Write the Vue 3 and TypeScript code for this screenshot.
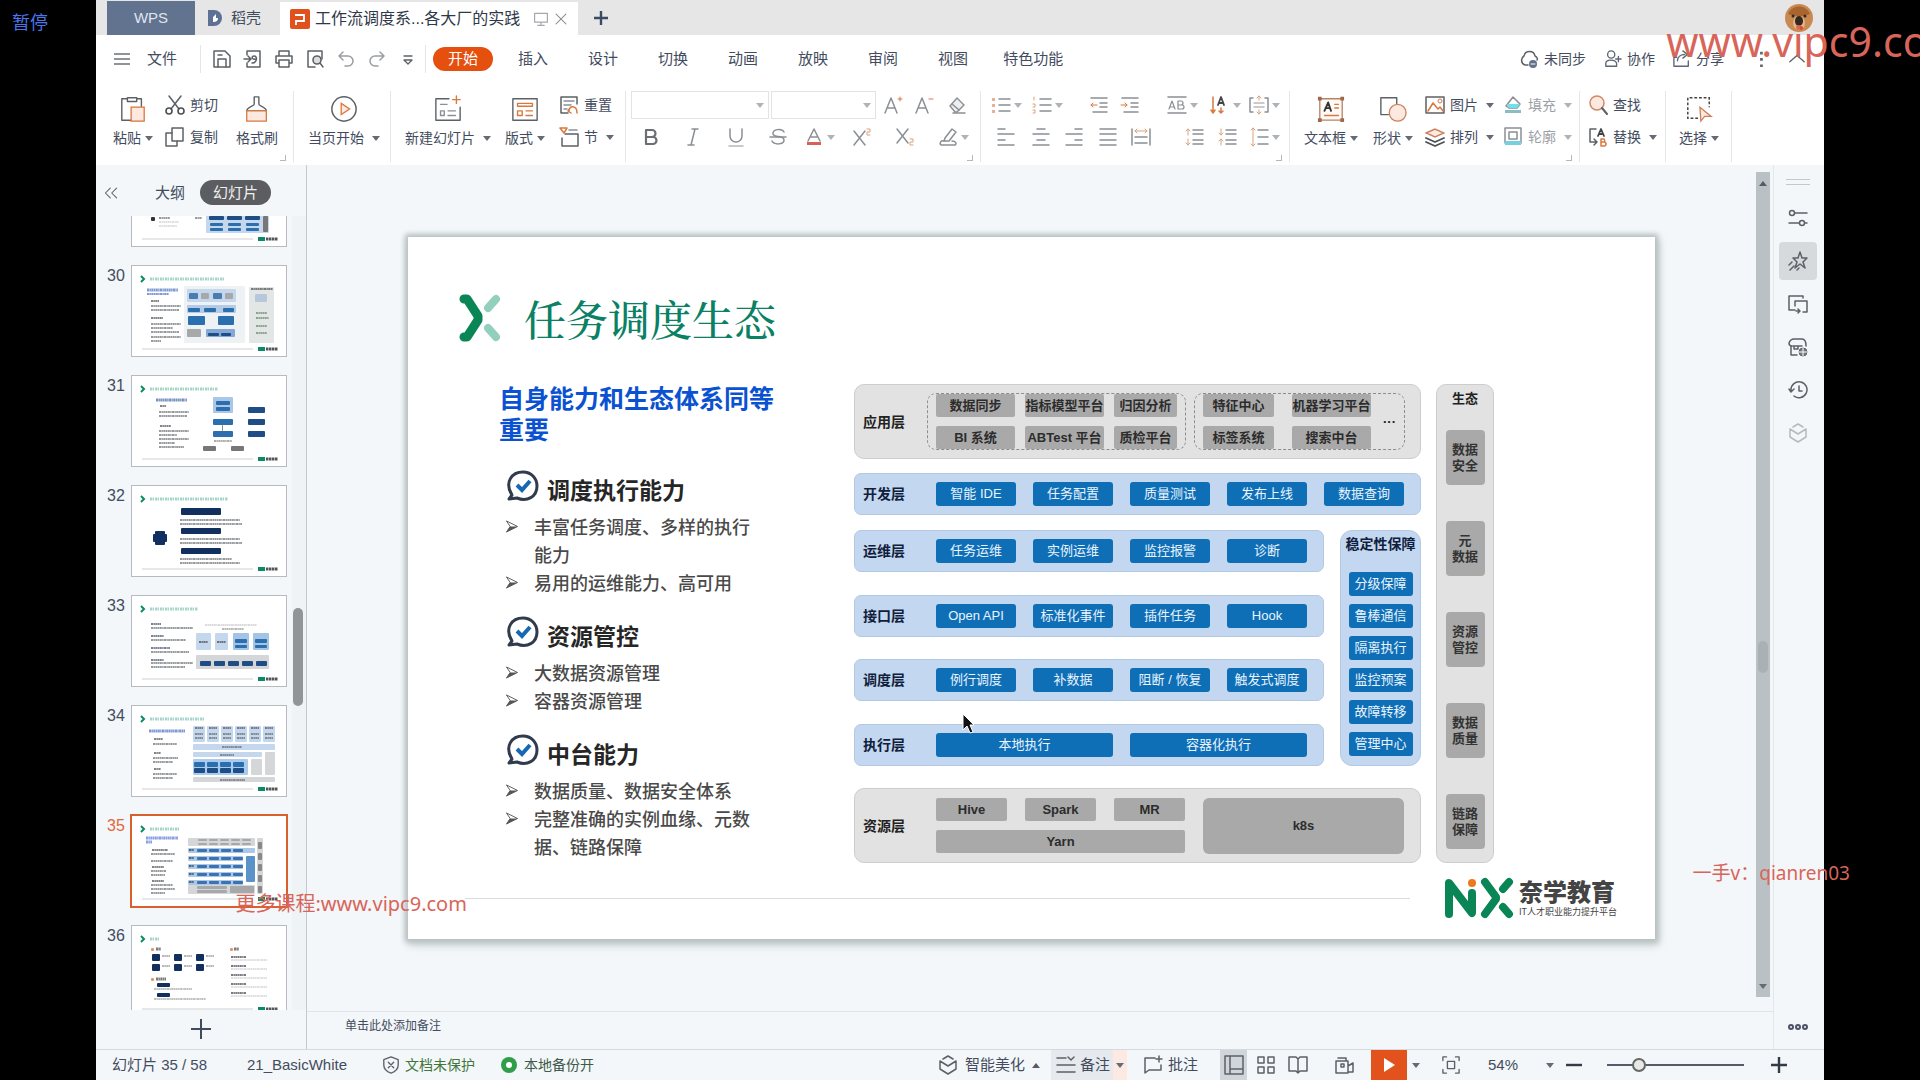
<script setup lang="ts">
import { ref } from 'vue'

interface Tool { id: string; label: string; caret?: boolean }
interface Mark { t: 'r' | 'd'; x: number; y: number; w: number; h: number; c: string }
interface Thumb { no: number; title: number; marks: Mark[] }

const G = '#5d6166'
const L = '#8a8f94'
const O = '#d9783f'

const line = (d: string, c = G, w = 1.5) =>
  `<path d="${d}" fill="none" stroke="${c}" stroke-width="${w}" stroke-linecap="round" stroke-linejoin="round"/>`
const solid = (d: string, c = G) => `<path d="${d}" fill="${c}"/>`

const icons: Record<string, string> = {
  save: line('M2 2H13L18 7V18H2Z') + line('M6 18V10H14V18M6 6H10'),
  export: line('M4 6V2H17V18H4V14') + line('M1 10H7M5 7L8 10L5 13M9 14C14 14 15 7 11 7C8 7 9 11 12 10'),
  print: line('M5 7V2H15V7M5 14H2V7H18V14H15M5 11H15V18H5Z'),
  preview: line('M17 10V2H3V18H10') + '<circle cx="12" cy="11" r="4" fill="#ddd" stroke="#5d6166" stroke-width="1.6"/>' + line('M15 14L18 18'),
  undo: line('M3 7H12A5 5 0 0 1 12 17H9M7 3L3 7L7 11', '#9a9da2'),
  redo: line('M17 7H8A5 5 0 0 0 8 17H11M13 3L17 7L13 11', '#9a9da2'),
  more: line('M6 7H14M6 11L10 15L14 11Z', G, 1.3),
  paste: line('M9 4H3V27H13M19 4H24V12') + line('M9 3H19V7H9Z') + '<rect x="13" y="13" width="14" height="15" fill="#fde9e0" stroke="#d9783f" stroke-width="1.4"/>',
  cut: line('M4 1L14 14M16 1L6 14') + '<circle cx="4" cy="16" r="3" fill="none" stroke="#4c5056" stroke-width="1.6"/><circle cx="16" cy="16" r="3" fill="none" stroke="#4c5056" stroke-width="1.6"/>',
  copy: line('M7 1H18V14H7Z') + line('M7 6H1V19H12V14'),
  brush: line('M12 10V2H17V10C17 12 25 13 25 17H4C4 13 12 12 12 10Z') + '<path d="M4 17V28H25V17Z" fill="#fde9e0" stroke="#d9783f" stroke-width="1.4"/>',
  play: '<circle cx="15" cy="15" r="13" fill="none" stroke="#5d6166" stroke-width="1.6"/><path d="M12 9L21 15L12 21Z" fill="#fde9e0" stroke="#d9783f" stroke-width="1.4"/>',
  newslide: line('M16 4H2V27H28V13') + line('M7 10H14M15 17H23M15 22H23M7 17H11V22H7Z', L) + line('M24 1V9M20 5H28', O),
  layout: line('M2 4H28V27H2Z') + line('M7 9H23V12H7ZM7 17H12V22H7Z', O) + line('M16 17H23M16 22H23', O),
  reset: line('M9 18H2V2H18V9') + line('M5 6H15M5 10H12M5 14H8', L) + line('M11 13L9 16L12 18M10 16C10 10 18 10 18 18', O),
  section: line('M6 7H19V19H3V11') + line('M10 3H18', L) + line('M1 1H8L5 6Z', O),
  aplus: line('M2 18L8 3L14 18M4 13H12', L) + line('M17 2V6M15 4H19', O, 1),
  aminus: line('M2 18L8 3L14 18M4 13H12', L) + line('M15 4H19', O, 1),
  eraser: '<path d="M3 11L10 3L17 10L10 17H8Z" fill="#eceef0" stroke="#8a8f94" stroke-width="1.4"/>' + line('M6 18H18M5 9L12 15', L),
  bold: line('M5 3H11A3 3 0 0 1 11 10H5ZM5 10H12A3 3 0 0 1 12 17H5Z', '#6b6f74', 2.2),
  italic: line('M9 2H15M5 18H11M12 2L8 18', L),
  under: line('M4 2V9A6 6 0 0 0 16 9V2', L) + line('M3 19H17', '#b5b8bb'),
  strike: line('M16 5C14 1 4 2 5 7C6 11 16 8 16 13C16 18 6 18 4 14', L) + line('M2 10H18', L),
  acolor: line('M4 14L10 2L16 14M6 10H14', L) + solid('M3 15H17V18H3Z', '#d8605a'),
  sup: line('M2 4L13 18M13 4L2 18', L) + line('M15 2H18V5H15V8H18', '#dba27e', 1),
  sub: line('M2 2L13 16M13 2L2 16', L) + line('M15 12H18V15H15V18H18', '#dba27e', 1),
  hilite: line('M7 11L14 2L18 5L11 14L6 14Z', L) + line('M3 18C1 16 3 13 6 14M3 18H17C19 17 18 14 14 14', L),
  bullets: line('M8 4H19M8 10H19M8 16H19', L) + solid('M1 3h3v3h-3zM1 9h3v3h-3zM1 15h3v3h-3z', '#e2b394'),
  numbers: line('M8 4H19M8 10H19M8 16H19', L) + line('M2 2V5M1 9H3V12H1M1 15H3V18H1', '#e2a27c', 1),
  outdent: line('M2 3H18M11 8H18M11 12H18M4 17H18', L) + line('M8 10H2M4 8L2 10L4 12', O, 1),
  indent: line('M2 3H18M11 8H18M11 12H18M4 17H18', L) + line('M1 10H7M5 8L7 10L5 12', O, 1),
  ab: line('M1 2H19M1 18H19', L) + line('M2 14L5 6L8 14M3 12H7M11 6V14H15A2 2 0 0 0 15 10H11M11 6H14A2 2 0 0 1 14 10', L, 1.2),
  dir: line('M3 2V17M1 15L3 18L5 15', O) + line('M8 10L11 2L14 10M9 8H13', '#444', 1.8) + line('M11 13V18M9 16L11 18L13 16', O),
  valign: line('M4 3H1V17H4M16 3H19V17H16', L) + line('M5 8H15M5 12H15', '#bbb') + line('M10 1V5M8 3L10 1L12 3M10 19V15M8 17L10 19L12 17', '#dba27e', 1),
  left: line('M2 2H9M2 7H18M2 13H9M2 18H18', L),
  center: line('M6 2H14M2 7H18M6 13H14M2 18H18', L),
  right: line('M11 2H18M2 7H18M11 13H18M2 18H18', L),
  justify: line('M2 2H18M2 7H18M2 13H18M2 18H18', L),
  spread: line('M1 2V18M19 2V18M4 10H16M4 16H16', L) + line('M4 4H16M6 2L4 4L6 6M14 2L16 4L14 6', '#dba27e', 1),
  lineUp: line('M9 3H19M9 7H19M9 13H19M9 17H19', L) + line('M4 8V2M2 4L4 2L6 4M4 12V18M2 16L4 18L6 16', '#dba27e', 1),
  lineDown: line('M9 3H19M9 7H19M9 13H19M9 17H19', L) + line('M4 2V8M2 6L4 8L6 6M4 18V12M2 14L4 12L6 14', '#dba27e', 1),
  lineGap: line('M9 3H19M9 10H19M9 17H19', L) + line('M4 1V19M2 3L4 1L6 3M2 17L4 19L6 17', '#dba27e', 1),
  textbox: '<path d="M3 4H27V27H3Z" fill="#fffaf7" stroke="#b9825f" stroke-width="1.4"/>' + line('M8 17L12 8L15 17M9 14H14', '#333', 2) + line('M19 10H23M19 14H23M8 22H23', O) + solid('M1 2h4v4h-4zM25 2h4v4h-4zM1 25h4v4h-4zM25 25h4v4h-4z', '#9a6a50'),
  shape: line('M10 21H2V3H19V9') + '<circle cx="20" cy="19" r="9" fill="#fde9e0" stroke="#c9825c" stroke-width="1.4"/>',
  image: line('M1 2H19V18H1Z') + line('M3 16L8 8L13 14L15 12L18 16', O) + '<circle cx="15" cy="6" r="2" fill="none" stroke="#d9783f"/>',
  arrange: line('M1 11L10 15L19 11M1 15L10 19L19 15', '#4c5056', 1.8) + '<path d="M1 6L10 2L19 6L10 10Z" fill="#fde9e0" stroke="#c9825c" stroke-width="1.4"/>',
  fill: line('M3 11L10 2L17 9L14 13H6Z', L) + solid('M4 9H17L14 13H6Z', '#6fe0ee') + solid('M2 15H18V18H2Z', '#8bbcc6'),
  outline: line('M2 1H18V16H2Z', L) + line('M6 5H14V12H6Z', L) + solid('M2 14H18V18H2Z', '#78cfe0'),
  find: '<circle cx="9" cy="8" r="7" fill="#fde9e0" stroke="#d08a68" stroke-width="1.5"/>' + line('M14 13L19 19', G, 2),
  replace: line('M8 2H2V15H8M6 12L9 15L6 18') + line('M10 9L13 2L16 9M11 7H15', '#444', 1.8) + line('M13 12V19H16A2 2 0 0 0 16 15H13M13 12H16A2 2 0 0 1 16 15', O),
  select: '<path d="M14 25H3V3H26V13" fill="none" stroke="#444" stroke-width="1.6" stroke-dasharray="3 2"/><path d="M16 13L28 23L21 23L17 28Z" fill="#fde9e0" stroke="#c9825c" stroke-width="1.4"/>',
  cloud: line('M9 16H6A5 5 0 0 1 5 7C6 1 15 1 16 7C18 8 19 10 18 11') + '<circle cx="14" cy="15" r="4" fill="#66718a"/>' + line('M12 15H16', '#fff', 1),
  coop: '<circle cx="8" cy="5" r="4" fill="none" stroke="#5d6675" stroke-width="1.5"/>' + line('M2 18V15C2 10 13 10 14 15V18ZM16 7V13M13 10H19', '#5d6675'),
  share: line('M4 8H1V18H17V12M5 12C5 7 9 5 13 5M11 1L16 5L11 9', '#5d6675'),
  up: line('M2 13L10 6L18 13'),
  setting: '<circle cx="4" cy="5" r="2.5" fill="none" stroke="#5d6166" stroke-width="1.5"/><circle cx="14" cy="15" r="2.5" fill="none" stroke="#5d6166" stroke-width="1.5"/>' + line('M7 5H19M1 15H11M17 15H19'),
  star: line('M12 1L14 7H19L15 11L17 17L12 13L7 17L9 11L5 7H10Z') + line('M4 11L1 14M6 15L2 19M11 17L9 19'),
  window: line('M7 16H1V2H15V4') + line('M7 12V7H19V18H15M8 17H12M10 15L12 17L10 19'),
  shop: line('M3 9V18H9M4 9A3 3 0 0 1 1 6C2 3 4 2 6 2H14C16 2 18 4 18 9') + line('M5 9H14M6 9V12H10V9') + '<circle cx="15" cy="15" r="4" fill="#777b80" stroke="#5d6166"/>' + line('M11 15H19M15 11V19', '#fff', 1),
  history: line('M3 10A8 8 0 1 1 6 16M1 9L3 12L6 9') + line('M11 6V11H14'),
  cube: line('M5 4L10 1L15 4M2 6V14L10 19L18 14V6L10 11Z'),
  shield: line('M10 1L18 4V10C18 15 13 18 10 19C7 18 2 15 2 10V4Z') + line('M7 7L13 13M13 7L7 13'),
  notes: line('M1 3H10M1 10H19M1 17H19M12 2L15 5L18 2'),
  comment: line('M12 3H2V18L6 15H18V10M16 1V7M13 4H19'),
  normal: line('M1 1H19V19H1ZM6 1V19M6 14H19'),
  grid: line('M2 2H8V8H2ZM12 2H18V8H12ZM2 12H8V18H2ZM12 12H18V18H12Z'),
  book: line('M10 4L8 2H1V16H8L10 18L12 16H19V2H12L10 4V18'),
  record: line('M2 6H14V18H2ZM14 11L19 8V17H14M4 3H12V6') + line('M7 9V12H10V9Z'),
  fit: line('M1 5V1H5M15 1H19V5M19 15V19H15M5 19H1V15') + line('M6 6H14V14H6Z'),
  monitor: line('M2 3H18V14H2ZM10 14V18M6 18H14', '#a5a9ae'),
  close: line('M3 3L17 17M17 3L3 17', '#8c9096'),
  collapse: line('M9 3L2 10L9 17M18 3L11 10L18 17'),
}

const quick: Tool[] = [
  { id: 'save', label: '保存' }, { id: 'export', label: '输出' }, { id: 'print', label: '打印' },
  { id: 'preview', label: '预览' }, { id: 'undo', label: '撤销' }, { id: 'redo', label: '恢复' }, { id: 'more', label: '更多' },
]
const menus = ['开始', '插入', '设计', '切换', '动画', '放映', '审阅', '视图', '特色功能']
const active = ref('开始')

const fontTools: Tool[] = [
  { id: 'bold', label: '加粗' }, { id: 'italic', label: '倾斜' }, { id: 'under', label: '下划线' }, { id: 'strike', label: '删除线' },
  { id: 'acolor', label: '字体颜色', caret: true }, { id: 'sup', label: '上标' }, { id: 'sub', label: '下标' }, { id: 'hilite', label: '突出显示', caret: true },
]
const paraTop: Tool[] = [
  { id: 'bullets', label: '项目符号', caret: true }, { id: 'numbers', label: '编号', caret: true }, { id: 'outdent', label: '减少缩进' },
  { id: 'indent', label: '增加缩进' }, { id: 'ab', label: '字符间距', caret: true }, { id: 'dir', label: '文字方向', caret: true }, { id: 'valign', label: '对齐文本', caret: true },
]
const paraBottom: Tool[] = [
  { id: 'left', label: '左对齐' }, { id: 'center', label: '居中' }, { id: 'right', label: '右对齐' }, { id: 'justify', label: '两端对齐' },
  { id: 'spread', label: '分散对齐' }, { id: 'lineUp', label: '增加段距' }, { id: 'lineDown', label: '减少段距' }, { id: 'lineGap', label: '行距', caret: true },
]
const side: Tool[] = [
  { id: 'setting', label: '属性' }, { id: 'star', label: '动画窗格' }, { id: 'window', label: '切换窗格' },
  { id: 'shop', label: '资源' }, { id: 'history', label: '历史' }, { id: 'cube', label: '美化' },
]

/* Miniature slides: r = filled block, d = a run of small print */
const r = (x: number, y: number, w: number, h: number, c: string): Mark => ({ t: 'r', x, y, w, h, c })
const d = (x: number, y: number, w: number, c = '#55595e', h = 2): Mark => ({ t: 'd', x, y, w, h, c })
const pale = '#c5d7ec', blue = '#2c6fae', deep = '#1f4e86', navy = '#12305f', grey = '#d4d6d8', mid = '#a6a8aa'
const range = (n: number) => Array.from({ length: n }, (_, i) => i)

const thumbs: Thumb[] = [
  { no: 29, title: 60, marks: [r(74, 44, 63, 33, pale), r(131, 60, 5, 16, '#777'), r(19, 61, 4, 4, '#333'), d(27, 62, 11), d(63, 62, 7), d(27, 66, 20, '#999', 1), d(27, 70, 18, '#999', 1),
    ...[0, 1, 2].flatMap(i => [r(77 + i * 18, 60, 15, 4, deep), r(78 + i * 18, 67, 13, 3, blue), r(78 + i * 18, 72, 13, 3, blue)])] },
  { no: 30, title: 74, marks: [r(52, 20, 61, 57, '#eff2f5'), r(55, 23, 49, 13, pale), r(55, 39, 49, 8, '#b3cbe6'), r(117, 21, 25, 56, '#e2e6e4'), d(15, 24, 31, '#2a56b8', 3), d(15, 28, 22, '#2a56b8'),
    r(57, 27, 9, 6, '#4a7daf'), r(81, 27, 9, 6, '#4a7daf'), r(69, 27, 8, 6, mid), r(93, 27, 8, 6, mid), r(56, 42, 12, 4, blue), r(72, 42, 12, 4, blue), r(91, 42, 11, 4, blue),
    r(56, 50, 17, 9, blue), r(86, 50, 16, 9, blue), r(55, 63, 14, 8, mid), r(74, 63, 29, 8, '#84a9d6'), r(76, 67, 11, 3, deep), r(89, 67, 10, 3, deep), r(123, 28, 12, 8, '#b8c8dc'),
    d(19, 35, 8, '#333'), d(19, 40, 30), d(19, 44, 28), d(19, 52, 12, '#333'), d(19, 58, 30), d(19, 62, 22), d(19, 66, 28), d(19, 71, 30), d(19, 75, 10), d(119, 23, 22, '#333'),
    d(124, 47, 11, '#567a5a'), d(124, 52, 13, '#567a5a'), d(124, 60, 11, '#567a5a'), d(124, 67, 11, '#567a5a')] },
  { no: 31, title: 68, marks: [r(81, 21, 20, 16, '#a9c7e6'), r(84, 25, 14, 4, blue), r(84, 31, 14, 4, blue), r(81, 43, 20, 6, blue), r(81, 55, 20, 6, blue), r(116, 31, 17, 6, deep), r(116, 43, 17, 6, deep), r(116, 55, 17, 6, deep),
    r(71, 70, 13, 5, '#777'), r(99, 70, 13, 5, '#777'), r(90, 49, 1, 6, '#888'), d(24, 24, 31, '#24499a', 3), d(28, 30, 6, '#333'), d(27, 36, 30), d(27, 40, 28), d(28, 50, 11, '#333'), d(27, 55, 30), d(27, 59, 18), d(27, 63, 30), d(27, 67, 16), d(27, 71, 25), d(82, 65, 18, '#777')] },
  { no: 32, title: 78, marks: [r(49, 22, 40, 7, navy), r(49, 42, 40, 6, navy), r(49, 62, 40, 6, navy), r(23, 45, 10, 14, navy), r(21, 48, 14, 8, navy), d(48, 34, 60), d(48, 38, 62), d(48, 53, 60), d(48, 57, 62), d(48, 73, 52), d(48, 77, 60)] },
  { no: 33, title: 48, marks: [r(64, 37, 15, 17, pale), r(83, 37, 13, 17, pale), r(101, 37, 16, 17, '#a4c4e6'), r(121, 37, 16, 17, '#a4c4e6'), r(64, 59, 73, 14, grey), r(103, 43, 12, 4, blue), r(103, 49, 12, 3, blue), r(123, 43, 12, 4, blue), r(123, 49, 12, 3, blue), d(67, 46, 9, '#333'), d(85, 46, 9, '#333'),
    ...range(5).map(i => r(68 + i * 14, 65, 11, 5, deep)), d(19, 28, 10, '#22304e'), d(19, 32, 42), d(19, 40, 13, '#22304e'), d(19, 44, 35), d(19, 52, 19, '#22304e'), d(19, 56, 38), d(19, 64, 13, '#22304e'), d(19, 67, 42), d(19, 71, 34), d(73, 29, 52, '#888', 1), d(90, 33, 22, '#888')] },
  { no: 34, title: 54, marks: [...range(6).flatMap(i => [r(61 + i * 14, 20, 12, 16, pale), d(63 + i * 14, 22, 8, '#444'), d(63 + i * 14, 28, 8), d(63 + i * 14, 32, 8)]), r(61, 38, 82, 6, pale), r(61, 46, 69, 5, pale), r(61, 53, 55, 16, '#a9cbee'),
    ...range(4).flatMap(i => [r(62 + i * 13, 56, 11, 5, blue), r(62 + i * 13, 62, 11, 5, deep)]), r(119, 53, 11, 16, grey), r(133, 46, 10, 23, grey), r(61, 71, 82, 5, grey), d(17, 25, 36, '#2a56b8', 3), d(22, 33, 9, '#333'), d(21, 38, 24), d(22, 47, 7, '#333'), d(21, 52, 25), d(21, 56, 20), d(22, 63, 7, '#333'), d(21, 68, 24), d(21, 72, 20), d(90, 41, 20), d(88, 49, 14), d(88, 74, 25)] },
  { no: 35, title: 30, marks: [r(56, 22, 67, 8, grey), ...range(5).flatMap(i => [r(66 + i * 11, 23, 9, 2, mid), r(66 + i * 11, 27, 9, 2, mid)]), ...range(5).flatMap(i => [r(56, 32 + i * 8, i === 0 ? 67 : 55, 5, '#a9c7e6'), ...range(4).map(j => r(65 + j * 12, 33 + i * 8, 10, 3, '#3d72b0')), d(57, 34 + i * 8, 5, '#223')]),
    r(114, 40, 9, 26, '#5b93c8'), r(56, 69, 67, 9, grey), r(65, 70, 30, 3, mid), r(65, 74, 30, 3, mid), r(98, 70, 24, 7, mid), r(125, 22, 6, 56, grey), ...range(5).map(i => r(126, 26 + i * 11, 4, 7, '#888')),
    d(14, 22, 32, '#3a62d0', 3), d(14, 26, 6, '#3a62d0', 3), d(20, 34, 16, '#333'), d(19, 38, 24), d(19, 45, 22), d(20, 51, 12, '#333'), d(19, 55, 15), d(19, 59, 14), d(20, 65, 12, '#333'), d(19, 69, 22), d(19, 73, 24), d(19, 77, 14)] },
  { no: 36, title: 10, marks: [...range(3).flatMap(i => [r(20 + i * 22, 28, 8, 7, navy), r(20 + i * 22, 38, 8, 7, navy), d(30 + i * 22, 30, 8, '#888'), d(30 + i * 22, 40, 8, '#888')]), r(25, 57, 13, 4, navy), r(25, 67, 13, 4, navy), r(19, 22, 3, 3, '#d96'), r(98, 22, 3, 3, '#d96'), r(19, 52, 3, 3, '#d96'),
    d(24, 23, 5, '#222', 3), d(102, 23, 5, '#222', 3), d(24, 53, 10, '#222', 3), d(22, 63, 38, '#999'), d(22, 73, 52, '#999'), ...range(5).flatMap(i => [d(99, 31 + i * 9, 15, '#223'), d(99, 34 + i * 9, 36, '#999', 1)])] },
]

const sections = [
  { head: '调度执行能力', items: ['丰富任务调度、多样的执行能力', '易用的运维能力、高可用'] },
  { head: '资源管控', items: ['大数据资源管理', '容器资源管理'] },
  { head: '中台能力', items: ['数据质量、数据安全体系', '完整准确的实例血缘、元数据、链路保障'] },
]
const appLeft = ['数据同步', '指标模型平台', '归因分析', 'BI 系统', 'ABTest 平台', '质检平台']
const appRight = ['特征中心', '机器学习平台', '标签系统', '搜索中台']
const layers = [
  { name: '运维层', chips: ['任务运维', '实例运维', '监控报警', '诊断'] },
  { name: '接口层', chips: ['Open API', '标准化事件', '插件任务', 'Hook'] },
  { name: '调度层', chips: ['例行调度', '补数据', '阻断 / 恢复', '触发式调度'] },
  { name: '执行层', chips: ['本地执行', '容器化执行'], wide: true },
]
const stability = ['分级保障', '鲁棒通信', '隔离执行', '监控预案', '故障转移', '管理中心']
const eco = [['数据', '安全'], ['元', '数据'], ['资源', '管控'], ['数据', '质量'], ['链路', '保障']]
const zoom = ref(20)
</script>

<template>
  <div class="screen">
    <div class="app">
      <header class="tabs">
        <button class="tab home">WPS</button>
        <button class="tab docer">
          <svg class="dlogo" viewBox="0 0 16 18"><path d="M1 1H7A8 8 0 0 1 7 17H1Z" fill="#5d7194" /><path d="M6 13V8L9 5V9H11C11 12 9 13 6 13Z" fill="#fff" /></svg>稻壳
        </button>
        <button class="tab doc">
          <svg class="plogo" viewBox="0 0 20 20"><rect width="20" height="20" rx="2" fill="#e1511d" /><path d="M5 6H14V12H6V16" fill="none" stroke="#fff" stroke-width="1.8" /></svg>
          <span class="name">工作流调度系...各大厂的实践</span>
          <svg class="i16" viewBox="0 0 20 20" v-html="icons.monitor"></svg>
          <svg class="i14" viewBox="0 0 20 20" v-html="icons.close"></svg>
        </button>
        <button class="tab add" aria-label="新建"><svg class="i16" viewBox="0 0 16 16"><path d="M8 1V15M1 8H15" stroke="#3d4a63" stroke-width="2.4" /></svg></button>
        <svg class="avatar" viewBox="0 0 28 28"><circle cx="14" cy="14" r="14" fill="#c98a52" /><path d="M3 10C7 0 21 0 25 10L19 12H9Z" fill="#a8652f" /><ellipse cx="14" cy="19" rx="6" ry="7" fill="#e0b688" /><ellipse cx="14" cy="17" rx="4" ry="5" fill="#33271f" /><circle cx="8" cy="12" r="1.5" fill="#33271f" /><circle cx="20" cy="12" r="1.5" fill="#33271f" /><circle cx="16" cy="24" r="2" fill="#e0432f" /></svg>
      </header>

      <nav class="menu">
        <button class="file"><svg class="i16" viewBox="0 0 16 16"><path d="M0 3H16M0 8H16M0 13H16" stroke="#6c7076" stroke-width="1.6" /></svg>文件</button>
        <div class="quick">
          <button v-for="q in quick" :key="q.id" :aria-label="q.label"><svg class="i20" viewBox="0 0 20 20" v-html="icons[q.id]"></svg></button>
        </div>
        <div class="menus">
          <button v-for="m in menus" :key="m" :class="{ on: active === m }" @click="active = m">{{ m }}</button>
        </div>
        <div class="account">
          <button><svg class="i20" viewBox="0 0 20 20" v-html="icons.cloud"></svg>未同步</button>
          <button><svg class="i18" viewBox="0 0 20 20" v-html="icons.coop"></svg>协作</button>
          <button><svg class="i18" viewBox="0 0 20 20" v-html="icons.share"></svg>分享</button>
          <button aria-label="更多"><svg class="i18" viewBox="0 0 20 20"><path d="M9 2h3v3h-3zM9 9h3v3h-3zM9 16h3v3h-3z" fill="#5d6675" /></svg></button>
          <button aria-label="收起"><svg class="i18" viewBox="0 0 20 20" v-html="icons.up"></svg></button>
        </div>
      </nav>

      <section class="ribbon">
        <div class="group g-clip">
          <button class="big"><svg viewBox="0 0 30 30" v-html="icons.paste"></svg><span>粘贴<i class="car"></i></span></button>
          <div class="pair">
            <button class="small"><svg viewBox="0 0 20 20" v-html="icons.cut"></svg>剪切</button>
            <button class="small"><svg viewBox="0 0 20 20" v-html="icons.copy"></svg>复制</button>
          </div>
          <button class="big"><svg viewBox="0 0 30 30" v-html="icons.brush"></svg><span>格式刷</span></button>
          <i class="corner"></i>
        </div>
        <div class="group g-play">
          <button class="big"><svg viewBox="0 0 30 30" v-html="icons.play"></svg><span>当页开始<i class="car wide"></i></span></button>
        </div>
        <div class="group g-slide">
          <button class="big"><svg viewBox="0 0 30 30" v-html="icons.newslide"></svg><span>新建幻灯片<i class="car wide"></i></span></button>
          <button class="big"><svg viewBox="0 0 30 30" v-html="icons.layout"></svg><span>版式<i class="car"></i></span></button>
          <div class="pair">
            <button class="small"><svg viewBox="0 0 20 20" v-html="icons.reset"></svg>重置</button>
            <button class="small"><svg viewBox="0 0 20 20" v-html="icons.section"></svg>节<i class="car"></i></button>
          </div>
        </div>
        <div class="group g-font">
          <div class="row font-top">
            <label class="combo"><select aria-label="字体"><option></option></select><i class="car pale"></i></label>
            <label class="combo size"><select aria-label="字号"><option></option></select><i class="car pale"></i></label>
            <button aria-label="增大字号"><svg class="i20" viewBox="0 0 20 20" v-html="icons.aplus"></svg></button>
            <button aria-label="减小字号"><svg class="i20" viewBox="0 0 20 20" v-html="icons.aminus"></svg></button>
            <button aria-label="清除格式"><svg class="i20" viewBox="0 0 20 20" v-html="icons.eraser"></svg></button>
          </div>
          <div class="row font-bottom">
            <button v-for="t in fontTools" :key="t.id" :aria-label="t.label"><svg class="i20" viewBox="0 0 20 20" v-html="icons[t.id]"></svg><i v-if="t.caret" class="car pale"></i></button>
          </div>
          <i class="corner"></i>
        </div>
        <div class="group g-para">
          <div class="row para-top">
            <button v-for="t in paraTop" :key="t.id" :aria-label="t.label"><svg class="i20" viewBox="0 0 20 20" v-html="icons[t.id]"></svg><i v-if="t.caret" class="car pale"></i></button>
          </div>
          <div class="row para-bottom">
            <button v-for="t in paraBottom" :key="t.id" :aria-label="t.label"><svg class="i20" viewBox="0 0 20 20" v-html="icons[t.id]"></svg><i v-if="t.caret" class="car pale"></i></button>
          </div>
          <i class="corner"></i>
        </div>
        <div class="group g-draw">
          <button class="big"><svg viewBox="0 0 30 30" v-html="icons.textbox"></svg><span>文本框<i class="car"></i></span></button>
          <button class="big"><svg viewBox="0 0 30 30" v-html="icons.shape"></svg><span>形状<i class="car"></i></span></button>
          <div class="pair">
            <button class="small"><svg viewBox="0 0 20 20" v-html="icons.image"></svg>图片<i class="car"></i></button>
            <button class="small"><svg viewBox="0 0 20 20" v-html="icons.arrange"></svg>排列<i class="car"></i></button>
          </div>
          <div class="pair off">
            <button class="small"><svg viewBox="0 0 20 20" v-html="icons.fill"></svg>填充<i class="car pale"></i></button>
            <button class="small"><svg viewBox="0 0 20 20" v-html="icons.outline"></svg>轮廓<i class="car pale"></i></button>
          </div>
          <i class="corner"></i>
        </div>
        <div class="group g-find">
          <div class="pair">
            <button class="small"><svg viewBox="0 0 20 20" v-html="icons.find"></svg>查找</button>
            <button class="small"><svg viewBox="0 0 20 20" v-html="icons.replace"></svg>替换<i class="car"></i></button>
          </div>
        </div>
        <div class="group g-select">
          <button class="big"><svg viewBox="0 0 30 30" v-html="icons.select"></svg><span>选择<i class="car"></i></span></button>
        </div>
      </section>

      <main class="work">
        <aside class="outline">
          <div class="switch">
            <button aria-label="折叠"><svg class="i14" viewBox="0 0 20 20" v-html="icons.collapse"></svg></button>
            <button class="out">大纲</button>
            <button class="on">幻灯片</button>
          </div>
          <div class="scroller">
            <ol class="thumbs">
              <li v-for="t in thumbs" :key="t.no" :class="{ current: t.no === 35 }">
                <span v-if="t.no > 29">{{ t.no }}</span><span v-else></span>
                <svg viewBox="0 0 154 90">
                  <path d="M9 10L12 13L9 16" fill="none" stroke="#0a8a66" stroke-width="2" />
                  <line x1="18" :x2="18 + t.title" y1="13" y2="13" stroke="#a5d6c8" stroke-width="3" stroke-dasharray="2 0.5 1.5 1" />
                  <template v-for="(m, i) in t.marks" :key="i">
                    <rect v-if="m.t === 'r'" :x="m.x" :y="m.y" :width="m.w" :height="m.h" rx="1" :fill="m.c" />
                    <line v-else :x1="m.x" :x2="m.x + m.w" :y1="m.y" :y2="m.y" :stroke="m.c" :stroke-width="m.h" stroke-dasharray="2.2 0.4 1.3 0.4" opacity="0.6" />
                  </template>
                  <path d="M10 83H121" stroke="#cfcfcf" />
                  <path d="M126 81H133V85H126Z" fill="#0a8a66" />
                  <path d="M134 83H146" stroke="#555" stroke-width="3" stroke-dasharray="2.5 0.5" />
                </svg>
              </li>
            </ol>
            <div class="track"><div class="grip"></div></div>
          </div>
          <button class="plus" aria-label="新建幻灯片"><svg class="i20" viewBox="0 0 20 20"><path d="M10 0V20M0 10H20" stroke="#424b5e" stroke-width="2" /></svg></button>
        </aside>

        <section class="stage">
          <div class="canvas">
            <article class="slide">
              <header class="title">
                <svg viewBox="0 0 42 48"><path d="M5 5H8L19 22V26L8 43H5" fill="none" stroke="#0a8556" stroke-width="9" stroke-linejoin="round" stroke-linecap="round" /><path d="M29 14L37 5M29 34L37 43" stroke="#93cfbd" stroke-width="8" stroke-linecap="round" /></svg>
                <h1>任务调度生态</h1>
              </header>
              <div class="body">
                <div class="points">
                  <h2>自身能力和生态体系同等重要</h2>
                  <section v-for="s in sections" :key="s.head">
                    <h3><svg viewBox="0 0 32 32"><path d="M5 25C-3 12 5 2 16 2C24 2 30 8 30 16C30 27 20 32 10 28L2 29Z" fill="#fff" stroke="#323b4e" stroke-width="3" stroke-linejoin="round" /><path d="M10 15L15 20L23 11" fill="none" stroke="#1768b4" stroke-width="4" /></svg>{{ s.head }}</h3>
                    <ul>
                      <li v-for="it in s.items" :key="it"><svg viewBox="0 0 14 14"><path d="M1 1L13 7L1 13L5 7Z" fill="#fff" stroke="#555" /><path d="M5 7H13L1 13Z" fill="#555" /></svg>{{ it }}</li>
                    </ul>
                  </section>
                </div>

                <div class="diagram">
                  <div class="layers">
                    <div class="layer grey tall">
                      <b>应用层</b>
                      <div class="dash three"><span v-for="c in appLeft" :key="c" class="cell">{{ c }}</span></div>
                      <div class="dash two"><span v-for="c in appRight" :key="c" class="cell">{{ c }}</span><em>···</em></div>
                    </div>
                    <div class="layer dev">
                      <b>开发层</b>
                      <div class="chips"><span>智能 IDE</span><span>任务配置</span><span>质量测试</span><span>发布上线</span><span>数据查询</span></div>
                    </div>
                    <div class="middle">
                      <div class="stack">
                        <div v-for="l in layers" :key="l.name" class="layer">
                          <b>{{ l.name }}</b>
                          <div class="chips four" :class="{ wide: l.wide }"><span v-for="c in l.chips" :key="c">{{ c }}</span></div>
                        </div>
                      </div>
                      <div class="stable">
                        <b>稳定性保障</b>
                        <span v-for="c in stability" :key="c">{{ c }}</span>
                      </div>
                    </div>
                    <div class="layer grey tall">
                      <b>资源层</b>
                      <div class="engines"><span class="cell">Hive</span><span class="cell">Spark</span><span class="cell">MR</span><span class="cell yarn">Yarn</span></div>
                      <span class="cell k8s">k8s</span>
                    </div>
                  </div>
                  <div class="eco">
                    <b>生态</b>
                    <div v-for="e in eco" :key="e.join('')"><span>{{ e[0] }}</span><span>{{ e[1] }}</span></div>
                  </div>
                </div>
              </div>
              <footer class="brand">
                <hr />
                <svg viewBox="0 0 70 42"><path d="M5 37V6L28 36V16" fill="none" stroke="#0a8556" stroke-width="8" stroke-linecap="round" stroke-linejoin="round" /><circle cx="28" cy="6" r="4" fill="#ec7a1c" /><path d="M41 5L52 20V22L41 37" fill="none" stroke="#0a8556" stroke-width="8" stroke-linecap="round" stroke-linejoin="round" /><path d="M59 12L65 5M59 30L65 37" stroke="#0a8556" stroke-width="8" stroke-linecap="round" /></svg>
                <div><strong>奈学教育</strong><small>IT人才职业能力提升平台</small></div>
              </footer>
              <svg class="cursor" viewBox="0 0 13 21"><path d="M1 1V17L5 13L8 20L11 19L8 12H12Z" fill="#111" stroke="#fff" /></svg>
            </article>
            <div class="vbar"><i class="car upward"></i><div class="vgrip"></div><i class="car"></i></div>
          </div>
          <div class="remark">单击此处添加备注</div>
        </section>

        <aside class="side">
          <div class="handle"></div>
          <button v-for="s in side" :key="s.id" :class="{ on: s.id === 'star', dim: s.id === 'cube' }" :aria-label="s.label"><svg class="i20" viewBox="0 0 20 20" v-html="icons[s.id]"></svg></button>
          <button class="dots" aria-label="更多"><svg class="i20" viewBox="0 0 20 8"><g fill="none" stroke="#4c5366" stroke-width="2"><circle cx="3" cy="4" r="2" /><circle cx="10" cy="4" r="2" /><circle cx="17" cy="4" r="2" /></g></svg></button>
        </aside>
      </main>

      <footer class="status">
        <span class="page">幻灯片 35 / 58</span>
        <span class="theme">21_BasicWhite</span>
        <button class="guard"><svg class="i18" viewBox="0 0 20 20" v-html="icons.shield"></svg>文档未保护</button>
        <button class="backup"><svg class="i16" viewBox="0 0 16 16"><circle cx="8" cy="8" r="8" fill="#2f9e4b" /><circle cx="8" cy="8" r="3" fill="#fff" /></svg>本地备份开</button>
        <div class="tools">
          <button class="smart"><svg class="i20" viewBox="0 0 20 20" v-html="icons.cube"></svg>智能美化<i class="car upward"></i></button>
          <button class="note"><svg class="i20" viewBox="0 0 20 20" v-html="icons.notes"></svg>备注</button>
          <button class="drop" aria-label="备注选项"><i class="car"></i></button>
          <button class="remarks"><svg class="i20" viewBox="0 0 20 20" v-html="icons.comment"></svg>批注</button>
          <div class="views">
            <button class="on" aria-label="普通"><svg class="i20" viewBox="0 0 20 20" v-html="icons.normal"></svg></button>
            <button aria-label="浏览"><svg class="i20" viewBox="0 0 20 20" v-html="icons.grid"></svg></button>
            <button aria-label="阅读"><svg class="i20" viewBox="0 0 20 20" v-html="icons.book"></svg></button>
          </div>
          <button class="rec" aria-label="录制"><svg class="i20" viewBox="0 0 20 20" v-html="icons.record"></svg></button>
          <button class="show" aria-label="放映"><svg class="i16" viewBox="0 0 16 16"><path d="M3 1L14 8L3 15Z" fill="#fff" /></svg></button>
          <button class="drop plain" aria-label="放映选项"><i class="car"></i></button>
          <button class="fit" aria-label="适应窗口"><svg class="i18" viewBox="0 0 20 20" v-html="icons.fit"></svg></button>
          <label class="percent"><select aria-label="缩放"><option>54%</option></select><i class="car"></i></label>
          <button aria-label="缩小"><svg class="i16" viewBox="0 0 16 16"><path d="M0 8H16" stroke="#333a48" stroke-width="2.4" /></svg></button>
          <input v-model="zoom" type="range" min="0" max="100" aria-label="缩放比例" />
          <button aria-label="放大"><svg class="i16" viewBox="0 0 16 16"><path d="M0 8H16M8 0V16" stroke="#333a48" stroke-width="2.4" /></svg></button>
        </div>
      </footer>
    </div>

    <span class="pause">暂停</span>
    <span class="mark site">www.vipc9.com</span>
    <span class="mark course">更多课程:www.vipc9.com</span>
    <span class="mark contact">一手v：qianren03</span>
  </div>
</template>

<style>
body { background: #000; }
</style>

<style scoped>
* { box-sizing: border-box; }
.screen { position: relative; overflow: hidden; height: 100vh; padding: 0 5%; background: #000; color: #434c5e; font: 15px/20px "Liberation Sans", "Noto Sans CJK SC", sans-serif; }
.app { display: flex; flex-direction: column; height: 100%; background: #f3f7f9; }
button { display: flex; align-items: center; padding: 0; border: 0; background: none; color: inherit; font: inherit; white-space: nowrap; }
svg { flex: none; display: block; }
.i14 { width: 14px; height: 14px; }
.i16 { width: 16px; height: 16px; }
.i18 { width: 18px; height: 18px; }
.i20 { width: 20px; height: 20px; }
.car { flex: none; width: 0; height: 0; border: 4px solid transparent; border-top: 5px solid #666b73; border-bottom: 0; }
.car.pale { border-top-color: #b0b3b6; }
.car.upward { border-top: 0; border-bottom: 5px solid #555c68; }

.tabs { display: flex; align-items: stretch; flex: none; height: 35px; padding-left: 11px; background: #e6e6e6; }
.home { width: 88px; justify-content: center; margin-top: 1px; background: #62738f; color: #dfe5ee; }
.docer { width: 85px; padding-left: 12px; gap: 8px; }
.dlogo { width: 16px; height: 18px; }
.doc { width: 298px; margin-top: 2px; padding: 0 10px; gap: 5px; background: #fff; color: #303848; }
.plogo { width: 20px; height: 20px; }
.doc .name { flex: 1; text-align: left; font-size: 16px; }
.add { padding-left: 15px; }
.avatar { width: 28px; height: 28px; margin: 4px 11px 0 auto; }

.menu { display: flex; align-items: center; flex: none; height: 48px; padding-left: 18px; background: #fff; }
.file { width: 86px; gap: 17px; }
.quick { display: flex; align-items: center; height: 28px; width: 226px; padding-left: 11px; gap: 11px; border-left: 1px solid #e3e5e8; border-right: 1px solid #e3e5e8; }
.menus { display: flex; gap: 10px; padding-left: 7px; }
.menus button { justify-content: center; min-width: 60px; height: 24px; padding: 0 15px; border-radius: 12px; }
.menus button:last-child { padding: 0 10px; }
.menus .on { background: #e5500f; color: #fff; }
.account { display: flex; margin-left: auto; padding-right: 18px; font-size: 14px; gap: 18px; }
.account button { gap: 5px; }
.account button:nth-child(4) { margin-left: 10px; }

.ribbon { display: flex; flex: none; height: 82px; padding: 8px 0 3px 11px; background: #fff; font-size: 14px; }
.group { position: relative; display: grid; align-content: start; border-right: 1px solid #e4e6e8; }
.g-clip { width: 187px; padding-left: 6px; grid-template-columns: 52px 71px 48px; }
.g-play { width: 97px; padding-left: 14px; }
.g-slide { width: 235px; padding-left: 14px; grid-template-columns: 100px 54px 60px; }
.g-font { width: 355px; row-gap: 4px; }
.g-para { width: 309px; row-gap: 4px; }
.g-draw { width: 290px; padding-left: 14px; grid-template-columns: 69px 52px 78px 70px; }
.g-find { width: 86px; padding-left: 8px; }
.g-select { width: 66px; padding-left: 13px; }
.big { flex-direction: column; gap: 4px; padding-top: 3px; justify-self: start; }
.big svg { width: 28px; height: 30px; }
.big span { display: flex; align-items: center; gap: 4px; }
.car.wide { margin-left: 4px; }
.pair { display: grid; grid-template-rows: 28px 28px; row-gap: 4px; }
.small { gap: 5px; }
.small svg { width: 20px; height: 20px; }
.small .car { margin-left: 3px; }
.off { color: #9da1a6; }
.corner { position: absolute; right: 7px; bottom: 1px; width: 6px; height: 6px; border: solid #b5b8bc; border-width: 0 1px 1px 0; }
.row { display: grid; height: 28px; align-items: center; }
.row button { gap: 3px; }
.font-top { padding-left: 5px; grid-template-columns: 140px 112px 31px 33px 20px; }
.font-bottom { padding-left: 15px; grid-template-columns: 42px 43px 42px 36px 48px 43px 43px 32px; }
.para-top { padding-left: 10px; grid-template-columns: 41px 57px 31px 47px 43px 39px 35px; }
.para-bottom { padding-left: 15px; grid-template-columns: 35px 33px 34px 33px 53px 33px 32px 34px; }
.combo { position: relative; width: 138px; height: 28px; }
.combo.size { width: 105px; }
.combo select { width: 100%; height: 100%; border: 1px solid #e3e3e3; background: #fff; appearance: none; }
.combo .car { position: absolute; right: 5px; top: 12px; }

.work { display: flex; flex: 1; min-height: 0; }
.outline { display: flex; flex-direction: column; flex: none; width: 211px; border-right: 1px solid #c3c9cc; }
.switch { display: flex; align-items: center; flex: none; height: 51px; padding: 4px 0 0 8px; }
.switch .out { margin-left: 37px; }
.switch .on { margin-left: 15px; padding: 0 13px; height: 25px; border-radius: 13px; background: #5b5d60; color: #f0f0f0; }
.scroller { display: flex; flex: 1; min-height: 0; overflow: hidden; }
.thumbs { flex: 1; display: flex; flex-direction: column; gap: 20px; margin: -60px 0 0; padding: 0 0 0 11px; list-style: none; font-size: 16px; }
.thumbs li { display: flex; }
.thumbs span { width: 25px; }
.thumbs svg { width: 154px; height: 90px; background: #fff; outline: 1px solid #b5bbbe; }
.thumbs .current { color: #e0663c; }
.thumbs .current svg { outline: 2px solid #d8602c; }
.track { width: 14px; background: #eef3f5; }
.grip { width: 10px; height: 98px; margin: 392px 0 0 1px; border-radius: 5px; background: #919598; }
.plus { flex: none; height: 39px; justify-content: center; padding-bottom: 2px; }

.stage { display: flex; flex-direction: column; flex: 1; min-width: 0; }
.canvas { display: flex; flex: 1; border-bottom: 1px solid #dfe5e8; }
.slide { position: relative; display: flex; flex-direction: column; flex: 1; margin: 72px 101px 72px; background: #fff; box-shadow: 0 0 5px 3px #b9c0c3, 2px 4px 8px 2px #c4cacc; }
.vbar { display: flex; flex-direction: column; align-items: center; justify-content: space-between; width: 14px; margin: 7px 3px 14px 0; padding: 9px 0 8px; background: #b9c1c4; }
.vgrip { width: 10px; height: 32px; margin-top: 144px; background: #a9b1b5; border-radius: 5px; }
.remark { flex: none; height: 37px; padding: 4px 0 0 38px; font-size: 12px; }

.title { display: flex; align-items: center; gap: 23px; height: 60px; margin: 51px 0 0 51px; }
.title svg { width: 42px; height: 48px; }
.title h1 { margin: 0; color: #0a8064; font-size: 42px; font-weight: 500; line-height: 60px; font-family: "Noto Serif CJK SC", "Noto Sans CJK SC", serif; }
.body { display: flex; padding: 34px 0 0 91px; }
.points { width: 355px; flex: none; font-family: "Noto Sans CJK SC", sans-serif; color: #4a4a4a; }
h2 { width: 280px; margin: 0 0 26px; color: #0b52d2; font-size: 25px; line-height: 31px; }
.points section { width: 250px; margin: 0 0 20px 8px; }
.points section:last-child { margin-bottom: 0; }
h3 { display: flex; align-items: flex-start; gap: 8px; height: 42px; margin: 0; color: #262626; font-size: 23px; line-height: 38px; }
h3 svg { width: 32px; height: 32px; }
.points ul { margin: 0; padding: 0; list-style: none; }
.points li { position: relative; padding-left: 27px; font-size: 18px; font-weight: 500; line-height: 28px; }
.points li svg { position: absolute; left: -2px; top: 8px; width: 14px; height: 13px; }

.diagram { display: flex; align-self: flex-start; gap: 15px; margin-top: 2px; font-size: 13px; }
.layers { display: flex; flex-direction: column; width: 567px; }
.layer { display: flex; align-items: center; height: 42px; padding-left: 8px; border: 1px solid #b3c8e2; border-radius: 7px; background: #c3d8f0; color: #10203c; }
.layer b { flex: none; width: 73px; font-size: 14px; }
.layer.grey { border-color: #cdcdcd; background: #e2e2e2; color: #222; }
.tall { height: 75px; border-radius: 10px; }
.dev { margin: 14px 0 15px; }
.chips { display: grid; grid-template-columns: repeat(5, 80px); gap: 17px; }
.chips.four { grid-template-columns: repeat(4, 80px); }
.chips.wide { grid-template-columns: 177px 177px; }
.chips span, .stable span { display: grid; place-items: center; height: 24px; border-radius: 3px; background: #0f6fb6; color: #e9f4ff; }
.cell { display: grid; place-items: center; height: 23px; border-radius: 2px; background: #a9a9a9; color: #2c2c2c; font-weight: bold; white-space: nowrap; }
.dash { display: grid; row-gap: 9px; padding: 0 8px; border: 1px dashed #8d8d8d; border-radius: 9px; }
.three { width: 259px; margin-left: -9px; grid-template-columns: 79px 79px 63px; column-gap: 10px; }
.two { width: 211px; margin-left: 8px; grid-template-columns: 71px 79px 22px; column-gap: 18px; }
.two .cell:nth-child(2) { grid-column: 2; }
.two em { grid-area: 1 / 3 / 3 / 4; align-self: center; margin-left: -6px; font-style: normal; font-weight: bold; }
.middle { display: flex; justify-content: space-between; }
.stack { display: flex; flex-direction: column; justify-content: space-between; width: 470px; height: 236px; }
.stable { display: flex; flex-direction: column; align-items: center; gap: 8px; width: 81px; height: 236px; padding-top: 3px; border: 1px solid #b3c8e2; border-radius: 12px; background: #c3d8f0; color: #10203c; }
.stable b { margin-bottom: 10px; font-size: 14px; white-space: nowrap; }
.stable span { width: 64px; }
.middle + .layer { margin-top: 22px; }
.engines { display: grid; grid-template-columns: 71px 71px 71px; gap: 9px 18px; }
.yarn { grid-column: 1 / 4; }
.k8s { width: 201px; height: 56px; margin-left: 18px; border-radius: 6px; }
.eco { display: flex; flex-direction: column; align-items: center; gap: 36px; width: 58px; height: 479px; padding-top: 4px; border: 1px solid #cdcdcd; border-radius: 10px; background: #e2e2e2; color: #333; }
.eco b { margin-bottom: -15px; color: #222; }
.eco div { display: flex; flex-direction: column; align-items: center; justify-content: center; width: 39px; height: 55px; border-radius: 4px; background: #a9a9a9; font-weight: bold; line-height: 16px; }

.brand { display: flex; align-items: center; height: 46px; margin: 12px 38px 0 57px; }
.brand hr { flex: 1; height: 1px; margin: 0 34px 0 0; border: 0; background: #dcdcdc; }
.brand svg { width: 70px; height: 42px; margin-right: 5px; }
.brand div { display: flex; flex-direction: column; color: #444; font-family: "Noto Sans CJK SC", sans-serif; }
.brand strong { font-size: 24px; line-height: 28px; font-weight: 900; }
.brand small { font-size: 9px; line-height: 14px; }
.cursor { position: absolute; left: 554px; top: 476px; width: 13px; height: 21px; }

.side { display: flex; flex-direction: column; align-items: center; flex: none; width: 51px; padding: 14px 3px 0 0; border-left: 1px solid #e2e7ea; }
.side .handle { width: 24px; height: 6px; margin-bottom: 14px; border: solid #c4c8cb; border-width: 1px 0; }
.side button { justify-content: center; width: 38px; height: 38px; margin-bottom: 5px; border-radius: 4px; }
.side .on { background: #d6dadc; }
.side .dim { opacity: 0.4; }
.side .dots { margin-top: auto; margin-bottom: 3px; }
.dots svg { height: 8px; }

.status { display: flex; align-items: center; flex: none; height: 31px; padding-left: 16px; border-top: 1px solid #d5dadd; white-space: nowrap; }
.page { width: 135px; }
.theme { width: 135px; }
.guard { width: 119px; gap: 5px; color: #41753a; font-size: 14px; }
.backup { gap: 7px; color: #3e5a4a; font-size: 14px; }
.tools { display: flex; align-items: center; align-self: stretch; margin-left: auto; padding-right: 37px; }
.smart { width: 113px; gap: 7px; }
.note { align-self: stretch; width: 62px; padding-left: 5px; gap: 4px; background: #e6eaee; }
.drop { align-self: stretch; justify-content: center; width: 14px; background: #fce9e2; }
.drop.plain { width: 18px; margin-right: 17px; background: none; }
.remarks { gap: 5px; margin: 0 22px 0 16px; }
.views { display: flex; align-self: stretch; gap: 5px; margin-right: 23px; }
.views button { width: 27px; justify-content: center; }
.views .on { background: #cfd5da; }
.rec { margin-right: 17px; }
.show { align-self: stretch; justify-content: center; width: 36px; background: #e1521d; }
.percent { position: relative; width: 78px; margin: 0 4px 0 24px; }
.percent select { width: 100%; padding: 0 4px; border: 0; background: none; color: inherit; font: inherit; appearance: none; }
.percent .car { position: absolute; right: 8px; top: 8px; }
.tools input { width: 137px; height: 16px; margin: 0 27px 0 25px; appearance: none; background: linear-gradient(#545b6e, #545b6e) center / 100% 2px no-repeat; }
.tools input::-webkit-slider-thumb { appearance: none; width: 14px; height: 14px; border: 2px solid #666; border-radius: 50%; background: #e8e8e8; }

.pause { position: absolute; left: 12px; top: 9px; color: #4a76ea; font-size: 18px; line-height: 28px; }
.mark { position: absolute; color: #d8655a; font-family: "Noto Sans", "Noto Sans CJK SC", sans-serif; white-space: nowrap; }
.site { left: 86%; top: 15px; padding-left: 15px; font-size: 41px; line-height: 52px; }
.course { left: 12%; top: 890px; padding-left: 5px; font-size: 20px; line-height: 28px; }
.contact { left: 88%; top: 859px; padding-left: 3px; font-size: 19px; line-height: 28px; }
</style>
